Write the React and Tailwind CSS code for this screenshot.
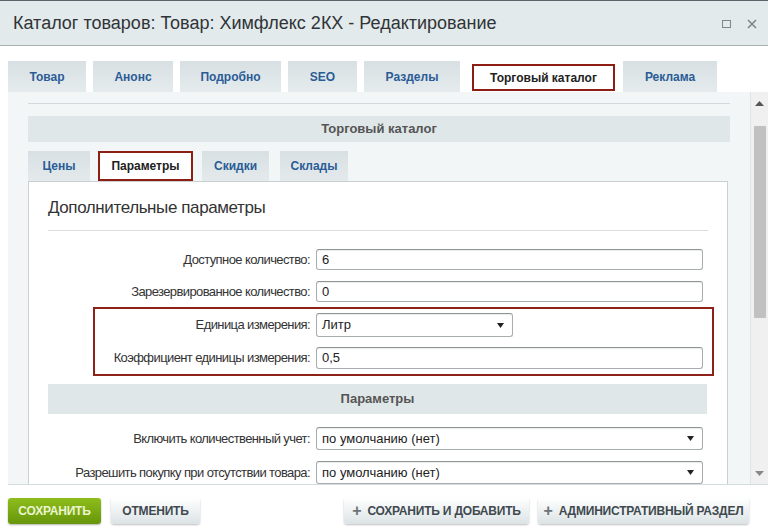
import React from 'react';

const tabs = [
  { label: 'Товар', w: 'w-[78px]' },
  { label: 'Анонс', w: 'w-[80px]' },
  { label: 'Подробно', w: 'w-[101px]' },
  { label: 'SEO', w: 'w-[69px]' },
  { label: 'Разделы', w: 'w-[96px]' },
  { label: 'Торговый каталог', w: 'w-[149px]', active: true },
  { label: 'Реклама', w: 'w-[94px]' },
];

const subTabs = [
  { label: 'Цены', w: 'w-[62px]', ml: '' },
  { label: 'Параметры', w: 'w-[95px]', ml: 'ml-[8px]', active: true },
  { label: 'Скидки', w: 'w-[67px]', ml: 'ml-[9px]' },
  { label: 'Склады', w: 'w-[68px]', ml: 'ml-[11px]' },
];

const Arrow = () => (
  <svg width="7" height="5" viewBox="0 0 7 5" className="shrink-0">
    <path d="M0 0h7L3.5 5z" fill="#222" />
  </svg>
);

const Field = ({ label, value, h = 'h-[21px]', w = 'w-[387px]', select }) => (
  <div className="flex items-center">
    <div className="w-[268px] pr-[6px] text-right text-[13px] tracking-[-0.6px] text-[#333]">{label}</div>
    <div
      className={`${h} ${w} flex items-center justify-between rounded-[3px] border border-[#a8adb0] border-t-[#8f9497] bg-white pl-[5px] pr-[8px] text-[13px] text-[#222] shadow-[inset_0_1px_1px_rgba(0,0,0,0.08)]`}
    >
      <span>{value}</span>
      {select && <Arrow />}
    </div>
  </div>
);

const GrayButton = ({ children, w, plus }) => (
  <div
    className={`${w} flex h-[26px] items-center justify-center gap-[6px] rounded-[3px] bg-gradient-to-b from-[#ffffff] to-[#dce3e5] text-[12px] font-bold tracking-[-0.2px] text-[#3f4a4f] shadow-[0_1px_2px_rgba(0,0,0,0.25)]`}
  >
    {plus && <span className="text-[16px] leading-none text-[#6b7378]">+</span>}
    {children}
  </div>
);

export default function App() {
  return (
    <div
      className="flex h-[531px] w-[768px] flex-col overflow-hidden bg-white"
      style={{ fontFamily: '"Liberation Sans", Arial, sans-serif' }}
    >
      {/* Header */}
      <div className="flex h-[46px] shrink-0 items-center justify-between border-t border-b border-t-[#59636a] border-b-[#a7afb2] bg-[#e3eaec] pl-[13px] pr-[11px]">
        <div className="text-[18px] text-[#2f3437]">Каталог товаров: Товар: Химфлекс 2КХ - Редактирование</div>
        <div className="flex items-center gap-[16px] pt-[2px]">
          <div className="h-[8px] w-[9px] border border-[#7d878c]" />
          <svg width="10" height="10" viewBox="0 0 10 10">
            <path d="M1 1l8 8M9 1l-8 8" stroke="#7d878c" strokeWidth="1.6" />
          </svg>
        </div>
      </div>

      {/* Tabs */}
      <div className="flex shrink-0 gap-[7px] pl-[8px] pt-[15px]">
        {tabs.map((t) =>
          t.active ? (
            <div key={t.label} className={`${t.w} flex h-[31px] bg-white pl-[5px] pt-[3px] pr-[1px] pb-[1px]`}>
              <div className="flex flex-1 items-center justify-center border-2 border-[#8d1e14] text-[12px] font-bold text-[#222]">
                {t.label}
              </div>
            </div>
          ) : (
            <div
              key={t.label}
              className={`${t.w} flex h-[31px] items-center justify-center bg-gradient-to-b from-[#d8e0e3] to-[#e5ebed] text-[12px] font-bold text-[#2a5c96]`}
            >
              {t.label}
            </div>
          )
        )}
      </div>

      {/* Content panel */}
      <div className="ml-[8px] flex h-[393px] shrink-0 border-b border-[#d5dcdf] bg-[#f3f6f7]">
        <div className="flex flex-1 flex-col overflow-hidden pl-[20px] pr-[20px] pt-[11px]">
          <div className="h-px bg-[#d3dadd]" />
          <div className="mt-[12px] flex h-[30px] items-center justify-center bg-[#e0e7e8] text-[13px] font-bold text-[#555]">
            Торговый каталог
          </div>

          {/* Sub tabs */}
          <div className="mt-[9px] flex">
            {subTabs.map((t) =>
              t.active ? (
                <div
                  key={t.label}
                  className={`${t.w} ${t.ml} flex h-[30px] items-center justify-center border-2 border-[#8d1e14] bg-white text-[12px] font-bold text-[#222]`}
                >
                  {t.label}
                </div>
              ) : (
                <div
                  key={t.label}
                  className={`${t.w} ${t.ml} flex h-[30px] items-center justify-center bg-gradient-to-b from-[#d8e0e3] to-[#e4eaec] text-[12px] font-bold text-[#2a5c96]`}
                >
                  {t.label}
                </div>
              )
            )}
          </div>

          {/* White panel */}
          <div className="w-[700px] flex-1 border border-b-0 border-[#c9d0d3] bg-white pl-[19px] pr-[19px]">
            <div className="flex h-[48px] items-center pt-[4px] text-[17px] tracking-[-0.4px] text-[#333]">Дополнительные параметры</div>
            <div className="h-px bg-[#dcdcdc]" />

            <div className="mt-[18px] flex flex-col gap-[11px]">
              <Field label="Доступное количество:" value="6" />
              <Field label="Зарезервированное количество:" value="0" />
            </div>

            <div className="ml-[45px] mt-[5px] flex w-[621px] flex-col border-2 border-[#8d2318] pb-[5px] pt-[4px]">
              <div className="-ml-[47px] flex flex-col gap-[10px]">
                <Field label="Единица измерения:" value="Литр" h="h-[24px]" w="w-[197px]" select />
                <Field label="Коэффициент единицы измерения:" value="0,5" h="h-[22px]" />
              </div>
            </div>

            <div className="mt-[8px] flex h-[30px] w-[659px] items-center justify-center bg-[#e0e7e8] text-[13px] font-bold text-[#555]">
              Параметры
            </div>

            <div className="mt-[13px] flex flex-col gap-[11px]">
              <Field label="Включить количественный учет:" value="по умолчанию (нет)" h="h-[23px]" select />
              <Field label="Разрешить покупку при отсутствии товара:" value="по умолчанию (нет)" h="h-[23px]" select />
            </div>
          </div>
        </div>

        {/* Scrollbar */}
        <div className="flex w-[18px] shrink-0 flex-col items-center border-l border-[#e0e4e6] bg-[#f0f0f0]">
          <svg width="9" height="5" viewBox="0 0 9 5" className="mt-[9px]">
            <path d="M0 5h9L4.5 0z" fill="#555" />
          </svg>
          <div className="mt-[20px] h-[192px] w-[12px] bg-[#c1c1c1]" />
          <div className="flex-1" />
          <svg width="9" height="5" viewBox="0 0 9 5" className="mb-[8px]">
            <path d="M0 0h9L4.5 5z" fill="#888" />
          </svg>
        </div>
      </div>

      {/* Footer */}
      <div className="flex flex-1 items-start pl-[8px] pt-[13px]">
        <div className="flex h-[26px] w-[93px] items-center justify-center rounded-[3px] bg-gradient-to-b from-[#8fbd1c] to-[#66960a] text-[12px] font-bold tracking-[-0.2px] text-[#eaf5cf] shadow-[0_1px_2px_rgba(0,0,0,0.3)]">
          СОХРАНИТЬ
        </div>
        <div className="ml-[10px]">
          <GrayButton w="w-[89px]">ОТМЕНИТЬ</GrayButton>
        </div>
        <div className="ml-[144px]">
          <GrayButton w="w-[185px]" plus>
            СОХРАНИТЬ И ДОБАВИТЬ
          </GrayButton>
        </div>
        <div className="ml-[9px]">
          <GrayButton w="w-[211px]" plus>
            АДМИНИСТРАТИВНЫЙ РАЗДЕЛ
          </GrayButton>
        </div>
      </div>
    </div>
  );
}
